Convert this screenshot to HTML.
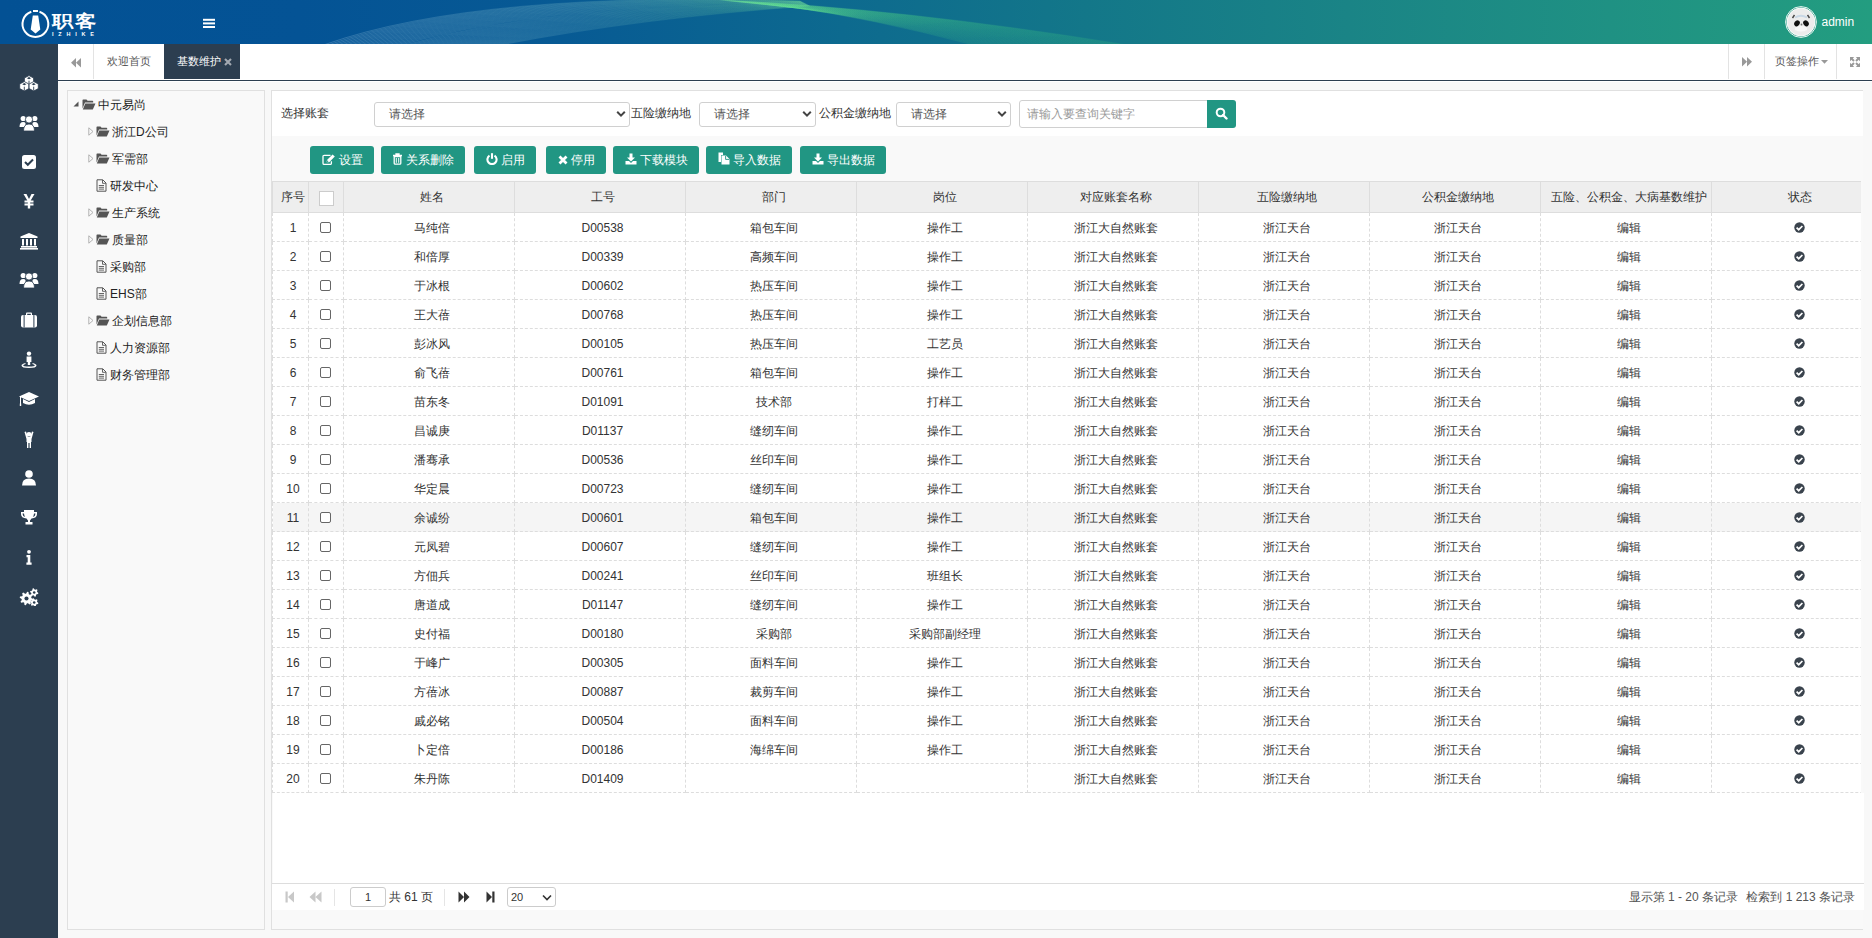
<!DOCTYPE html>
<html><head><meta charset="utf-8"><title>基数维护</title>
<style>
*{margin:0;padding:0;box-sizing:border-box}
html,body{width:1872px;height:938px;overflow:hidden}
body{position:relative;font-family:"Liberation Sans",sans-serif;font-size:12px;color:#333;background:#f8f8f8}
.a{position:absolute}
#hdr{left:0;top:0;width:1872px;height:44px;background:linear-gradient(90deg,#035194 0%,#045395 16%,#075a94 30%,#0d6a8f 45%,#137789 58%,#1a8486 72%,#1f9183 86%,#239d80 100%);overflow:hidden}
#side{left:0;top:44px;width:58px;height:894px;background:#2c3e50}
#side svg{position:absolute;left:19px;fill:#fff}
#tabs{left:58px;top:44px;width:1814px;height:37px;background:#fff;border-bottom:1px solid #2c3e50}
.tb{position:absolute;top:0;height:35px;line-height:35px;text-align:center;color:#555;font-size:12px}
#content{left:58px;top:81px;width:1814px;height:857px;background:#f8f8f8}
#tree{left:67px;top:90px;width:198px;height:840px;background:#f9f9f9;border:1px solid #e0e0e0}
.ti{position:absolute;height:20px;line-height:20px;color:#222;font-size:12px;white-space:nowrap}
#main{left:271px;top:90px;width:1592px;height:840px;background:#f9f9f9;border:1px solid #e0e0e0;border-right:none}
#srch{left:0;top:0;width:1591px;height:45px;background:#fff}
.lbl{position:absolute;top:0;height:45px;line-height:45px;color:#333;font-size:12px;white-space:nowrap}
.sel{position:absolute;height:25px;border:1px solid #d0d0d0;border-radius:3px;background:#fff;color:#555;font-size:12px;line-height:23px}
.sel .arr{position:absolute;right:3px;top:7px;width:10px;height:8px}
.btn{position:absolute;top:55px;height:28px;line-height:28px;background:#219683;color:#fff;border-radius:3px;font-size:12px;white-space:nowrap;text-align:center}
.btn svg{vertical-align:-1px;fill:#fff;margin-right:3px}
#tw{position:absolute;left:0;top:90px;width:1589px;height:702px;overflow:hidden}
#tbl{position:absolute;left:0;top:0;width:1610px;border-collapse:collapse;table-layout:fixed;background:#fff}
#tbl th{height:31px;background:#eee;border:1px solid #ddd;font-weight:normal;color:#333;font-size:12px;padding:0 0 0 5px;text-align:center}
#tbl td{height:29px;border:1px dashed #ddd;text-align:center;color:#333;font-size:12px;padding:2px 0 0 5px;white-space:nowrap}
#tbl th.c{padding:0}
#tbl td.c{padding:2px 0 0 0}
#tbl tr.hov td{background:#f5f5f5}
.cb{display:inline-block;width:11px;height:11px;border:1px solid #666;border-radius:2px;vertical-align:middle;background:#fff;position:relative;left:-1px;top:-1px}
.cbh{display:inline-block;width:15px;height:15px;border:1px solid #ccc;background:#fff;vertical-align:middle;position:relative;top:1px}
.ok{display:inline-block;width:11px;height:11px;vertical-align:middle;position:relative;top:-1px}
#white{left:1px;top:702px;width:1591px;height:91px;background:#fff}
#pager{left:0;top:792px;width:1592px;height:27px;background:#fff;border-top:1px solid #ddd}

</style></head><body>
<div id="hdr" class="a">
<svg class="a" style="left:0;top:0" width="1872" height="44" viewBox="0 0 1872 44">
<defs><linearGradient id="g1" gradientUnits="userSpaceOnUse" x1="330" y1="0" x2="830" y2="0"><stop offset="0" stop-color="rgb(200,230,245)" stop-opacity="0.5"/><stop offset="0.5" stop-color="rgb(160,220,215)" stop-opacity="0.3"/><stop offset="0.8" stop-color="rgb(120,215,160)" stop-opacity="0.25"/><stop offset="1" stop-color="rgb(110,225,150)" stop-opacity="0.3"/></linearGradient>
<linearGradient id="g2" gradientUnits="userSpaceOnUse" x1="720" y1="0" x2="1130" y2="44"><stop offset="0" stop-color="rgb(110,225,150)" stop-opacity="0.35"/><stop offset="0.4" stop-color="rgb(80,215,130)" stop-opacity="0.32"/><stop offset="1" stop-color="rgb(60,205,125)" stop-opacity="0.3"/></linearGradient></defs>
<g fill="none" stroke-width="0.45">
<path d="M325.0 44.5 Q480.0 -10.0 800.0 1.0" stroke="url(#g1)"/>
<path d="M329.6 44.5 Q484.1 -9.3 800.3 1.1" stroke="url(#g1)"/>
<path d="M334.1 44.5 Q488.2 -8.6 800.5 1.3" stroke="url(#g1)"/>
<path d="M338.7 44.5 Q492.3 -7.8 800.8 1.4" stroke="url(#g1)"/>
<path d="M343.3 44.5 Q496.4 -7.1 801.0 1.5" stroke="url(#g1)"/>
<path d="M347.8 44.5 Q500.5 -6.4 801.3 1.6" stroke="url(#g1)"/>
<path d="M352.4 44.5 Q504.6 -5.7 801.5 1.8" stroke="url(#g1)"/>
<path d="M356.9 44.5 Q508.7 -5.0 801.8 1.9" stroke="url(#g1)"/>
<path d="M361.5 44.5 Q512.8 -4.3 802.1 2.0" stroke="url(#g1)"/>
<path d="M366.1 44.5 Q516.9 -3.5 802.3 2.2" stroke="url(#g1)"/>
<path d="M370.6 44.5 Q521.0 -2.8 802.6 2.3" stroke="url(#g1)"/>
<path d="M375.2 44.5 Q525.1 -2.1 802.8 2.4" stroke="url(#g1)"/>
<path d="M379.8 44.5 Q529.2 -1.4 803.1 2.5" stroke="url(#g1)"/>
<path d="M384.3 44.5 Q533.3 -0.7 803.3 2.7" stroke="url(#g1)"/>
<path d="M388.9 44.5 Q537.4 0.1 803.6 2.8" stroke="url(#g1)"/>
<path d="M393.5 44.5 Q541.5 0.8 803.8 2.9" stroke="url(#g1)"/>
<path d="M398.0 44.5 Q545.6 1.5 804.1 3.1" stroke="url(#g1)"/>
<path d="M402.6 44.5 Q549.7 2.2 804.4 3.2" stroke="url(#g1)"/>
<path d="M407.2 44.5 Q553.8 2.9 804.6 3.3" stroke="url(#g1)"/>
<path d="M411.7 44.5 Q557.9 3.6 804.9 3.4" stroke="url(#g1)"/>
<path d="M416.3 44.5 Q562.1 4.4 805.1 3.6" stroke="url(#g1)"/>
<path d="M420.8 44.5 Q566.2 5.1 805.4 3.7" stroke="url(#g1)"/>
<path d="M425.4 44.5 Q570.3 5.8 805.6 3.8" stroke="url(#g1)"/>
<path d="M430.0 44.5 Q574.4 6.5 805.9 3.9" stroke="url(#g1)"/>
<path d="M434.5 44.5 Q578.5 7.2 806.2 4.1" stroke="url(#g1)"/>
<path d="M439.1 44.5 Q582.6 7.9 806.4 4.2" stroke="url(#g1)"/>
<path d="M443.7 44.5 Q586.7 8.7 806.7 4.3" stroke="url(#g1)"/>
<path d="M448.2 44.5 Q590.8 9.4 806.9 4.5" stroke="url(#g1)"/>
<path d="M452.8 44.5 Q594.9 10.1 807.2 4.6" stroke="url(#g1)"/>
<path d="M457.4 44.5 Q599.0 10.8 807.4 4.7" stroke="url(#g1)"/>
<path d="M461.9 44.5 Q603.1 11.5 807.7 4.8" stroke="url(#g1)"/>
<path d="M466.5 44.5 Q607.2 12.3 807.9 5.0" stroke="url(#g1)"/>
<path d="M471.1 44.5 Q611.3 13.0 808.2 5.1" stroke="url(#g1)"/>
<path d="M475.6 44.5 Q615.4 13.7 808.5 5.2" stroke="url(#g1)"/>
<path d="M480.2 44.5 Q619.5 14.4 808.7 5.4" stroke="url(#g1)"/>
<path d="M484.7 44.5 Q623.6 15.1 809.0 5.5" stroke="url(#g1)"/>
<path d="M489.3 44.5 Q627.7 15.8 809.2 5.6" stroke="url(#g1)"/>
<path d="M493.9 44.5 Q631.8 16.6 809.5 5.7" stroke="url(#g1)"/>
<path d="M498.4 44.5 Q635.9 17.3 809.7 5.9" stroke="url(#g1)"/>
<path d="M503.0 44.5 Q640.0 18.0 810.0 6.0" stroke="url(#g1)"/>
<path d="M720.0 0.0 Q900.0 8.0 1124.0 44.5" stroke="url(#g2)"/>
<path d="M721.8 0.2 Q899.2 8.3 1120.1 44.5" stroke="url(#g2)"/>
<path d="M723.6 0.4 Q898.5 8.5 1116.2 44.5" stroke="url(#g2)"/>
<path d="M725.4 0.5 Q897.7 8.8 1112.3 44.5" stroke="url(#g2)"/>
<path d="M727.2 0.7 Q896.9 9.0 1108.4 44.5" stroke="url(#g2)"/>
<path d="M729.0 0.9 Q896.2 9.3 1104.5 44.5" stroke="url(#g2)"/>
<path d="M730.8 1.1 Q895.4 9.5 1100.6 44.5" stroke="url(#g2)"/>
<path d="M732.6 1.3 Q894.6 9.8 1096.7 44.5" stroke="url(#g2)"/>
<path d="M734.4 1.4 Q893.8 10.1 1092.8 44.5" stroke="url(#g2)"/>
<path d="M736.2 1.6 Q893.1 10.3 1088.9 44.5" stroke="url(#g2)"/>
<path d="M737.9 1.8 Q892.3 10.6 1085.0 44.5" stroke="url(#g2)"/>
<path d="M739.7 2.0 Q891.5 10.8 1081.1 44.5" stroke="url(#g2)"/>
<path d="M741.5 2.2 Q890.8 11.1 1077.2 44.5" stroke="url(#g2)"/>
<path d="M743.3 2.3 Q890.0 11.3 1073.3 44.5" stroke="url(#g2)"/>
<path d="M745.1 2.5 Q889.2 11.6 1069.4 44.5" stroke="url(#g2)"/>
<path d="M746.9 2.7 Q888.5 11.8 1065.5 44.5" stroke="url(#g2)"/>
<path d="M748.7 2.9 Q887.7 12.1 1061.6 44.5" stroke="url(#g2)"/>
<path d="M750.5 3.1 Q886.9 12.4 1057.7 44.5" stroke="url(#g2)"/>
<path d="M752.3 3.2 Q886.2 12.6 1053.8 44.5" stroke="url(#g2)"/>
<path d="M754.1 3.4 Q885.4 12.9 1049.9 44.5" stroke="url(#g2)"/>
<path d="M755.9 3.6 Q884.6 13.1 1046.1 44.5" stroke="url(#g2)"/>
<path d="M757.7 3.8 Q883.8 13.4 1042.2 44.5" stroke="url(#g2)"/>
<path d="M759.5 3.9 Q883.1 13.6 1038.3 44.5" stroke="url(#g2)"/>
<path d="M761.3 4.1 Q882.3 13.9 1034.4 44.5" stroke="url(#g2)"/>
<path d="M763.1 4.3 Q881.5 14.2 1030.5 44.5" stroke="url(#g2)"/>
<path d="M764.9 4.5 Q880.8 14.4 1026.6 44.5" stroke="url(#g2)"/>
<path d="M766.7 4.7 Q880.0 14.7 1022.7 44.5" stroke="url(#g2)"/>
<path d="M768.5 4.8 Q879.2 14.9 1018.8 44.5" stroke="url(#g2)"/>
<path d="M770.3 5.0 Q878.5 15.2 1014.9 44.5" stroke="url(#g2)"/>
<path d="M772.1 5.2 Q877.7 15.4 1011.0 44.5" stroke="url(#g2)"/>
<path d="M773.8 5.4 Q876.9 15.7 1007.1 44.5" stroke="url(#g2)"/>
<path d="M775.6 5.6 Q876.2 15.9 1003.2 44.5" stroke="url(#g2)"/>
<path d="M777.4 5.7 Q875.4 16.2 999.3 44.5" stroke="url(#g2)"/>
<path d="M779.2 5.9 Q874.6 16.5 995.4 44.5" stroke="url(#g2)"/>
<path d="M781.0 6.1 Q873.8 16.7 991.5 44.5" stroke="url(#g2)"/>
<path d="M782.8 6.3 Q873.1 17.0 987.6 44.5" stroke="url(#g2)"/>
<path d="M784.6 6.5 Q872.3 17.2 983.7 44.5" stroke="url(#g2)"/>
<path d="M786.4 6.6 Q871.5 17.5 979.8 44.5" stroke="url(#g2)"/>
<path d="M788.2 6.8 Q870.8 17.7 975.9 44.5" stroke="url(#g2)"/>
<path d="M790.0 7.0 Q870.0 18.0 972.0 44.5" stroke="url(#g2)"/>
</g>
<g fill="none" stroke="#fff" stroke-width="2"><path d="M31.3 11.8 A12.9 12.9 0 1 0 39.5 11.8"/></g>
<rect x="33" y="10" width="5" height="2" fill="#fff"/>
<path d="M32.8 15.5 L38.2 15.5 L40.3 29.5 L35.5 33.5 L30.7 29.5 Z" fill="#fff"/>
<text x="0" y="0" transform="translate(51.5 27.4) scale(1 0.8)" font-family="Liberation Sans,sans-serif" font-size="21" font-weight="bold" fill="#fff" textLength="44">职客</text>
<text x="52" y="35.5" font-family="Liberation Sans,sans-serif" font-size="5.5" font-weight="bold" fill="#fff" textLength="42" lengthAdjust="spacing">IZHIKE</text>
<rect x="203" y="18.8" width="12" height="2" fill="#fff"/><rect x="203" y="22.4" width="12" height="2" fill="#fff"/><rect x="203" y="26" width="12" height="2" fill="#fff"/>
<circle cx="1801" cy="22" r="15.4" fill="none" stroke="#fff" stroke-width="0.9"/>
<circle cx="1801" cy="22" r="14" fill="#ececec" stroke="#fff" stroke-width="0.9"/>
<path d="M1795 30 Q1801 33 1807 30 Q1808 26 1801 26 Q1794 26 1795 30Z" fill="#f8f8f8"/>
<path d="M1794.5 15 l-2 3 M1807.5 15 l2 3" stroke="#444" stroke-width="1.4"/>
<path d="M1795 17.5 Q1801 14 1807 17.5" stroke="#c9d8e6" stroke-width="2" fill="none"/>
<ellipse cx="1797" cy="23.3" rx="2.6" ry="3.2" fill="#111" transform="rotate(35 1797 23.3)"/><ellipse cx="1806" cy="23.3" rx="2.6" ry="3.2" fill="#111" transform="rotate(-35 1806 23.3)"/>
<circle cx="1801.5" cy="24.5" r="0.9" fill="#777"/>
<text x="1821.5" y="25.6" font-family="Liberation Sans,sans-serif" font-size="12" fill="#fff">admin</text>
</svg>
</div>
<div id="side" class="a">
<svg style="left:19.0px;top:30.5px" width="20" height="17" viewBox="0 0 20 17"><path d="M10.00 0.60 L14.60 3.00 L14.60 7.60 L10.00 10.00 L5.40 7.60 L5.40 3.00Z" fill="#fff" stroke="#2c3e50" stroke-width="0.8"/><path d="M10.00 2.12 L12.07 3.20 L10.00 4.28 L7.93 3.20Z" fill="#2c3e50"/><path d="M10.00 5.70 V9.70" stroke="#2c3e50" stroke-width="0.9"/><path d="M5.30 6.60 L9.90 9.00 L9.90 13.60 L5.30 16.00 L0.70 13.60 L0.70 9.00Z" fill="#fff" stroke="#2c3e50" stroke-width="0.8"/><path d="M5.30 8.12 L7.37 9.20 L5.30 10.28 L3.23 9.20Z" fill="#2c3e50"/><path d="M5.30 11.70 V15.70" stroke="#2c3e50" stroke-width="0.9"/><path d="M14.70 6.60 L19.30 9.00 L19.30 13.60 L14.70 16.00 L10.10 13.60 L10.10 9.00Z" fill="#fff" stroke="#2c3e50" stroke-width="0.8"/><path d="M14.70 8.12 L16.77 9.20 L14.70 10.28 L12.63 9.20Z" fill="#2c3e50"/><path d="M14.70 11.70 V15.70" stroke="#2c3e50" stroke-width="0.9"/></svg>
<svg style="left:19.0px;top:70.0px" width="20" height="18" viewBox="0 0 20 18"><circle cx="4.2" cy="4.5" r="2.6"/><circle cx="15.8" cy="4.5" r="2.6"/><path d="M0.5 13 Q0.5 8 4.2 8 Q6 8 6.5 9 L6.5 13Z"/><path d="M19.5 13 Q19.5 8 15.8 8 Q14 8 13.5 9 L13.5 13Z"/><circle cx="10" cy="5.5" r="3.6" stroke="#2c3e50" stroke-width="0.8"/><path d="M4.5 17 Q4.5 10 10 10 Q15.5 10 15.5 17Z" stroke="#2c3e50" stroke-width="0.8"/></svg>
<svg style="left:19.0px;top:109.0px" width="20" height="18" viewBox="0 0 20 18"><rect x="3" y="2" width="14" height="14" rx="2.5"/><path d="M6 9 L8.8 11.8 L14 6.5" stroke="#2c3e50" stroke-width="2" fill="none"/></svg>
<svg style="left:19.0px;top:148.0px" width="20" height="18" viewBox="0 0 20 18"><path d="M4.5 2h3l2.5 5 2.5-5h3l-3.8 6.5h2.8v2h-3.3v1h3.3v2h-3.3v3h-2.4v-3h-3.3v-2h3.3v-1h-3.3v-2h2.8z"/></svg>
<svg style="left:19.0px;top:188.0px" width="20" height="18" viewBox="0 0 20 18"><path d="M10 1 L18.5 4.5 V6 H1.5 V4.5Z"/><rect x="3" y="7" width="2" height="6.5"/><rect x="7" y="7" width="2" height="6.5"/><rect x="11" y="7" width="2" height="6.5"/><rect x="15" y="7" width="2" height="6.5"/><rect x="2" y="14" width="16" height="1.6"/><rect x="1" y="16" width="18" height="1.6"/></svg>
<svg style="left:19.0px;top:227.0px" width="20" height="18" viewBox="0 0 20 18"><circle cx="4.2" cy="4.5" r="2.6"/><circle cx="15.8" cy="4.5" r="2.6"/><path d="M0.5 13 Q0.5 8 4.2 8 Q6 8 6.5 9 L6.5 13Z"/><path d="M19.5 13 Q19.5 8 15.8 8 Q14 8 13.5 9 L13.5 13Z"/><circle cx="10" cy="5.5" r="3.6" stroke="#2c3e50" stroke-width="0.8"/><path d="M4.5 17 Q4.5 10 10 10 Q15.5 10 15.5 17Z" stroke="#2c3e50" stroke-width="0.8"/></svg>
<svg style="left:19.0px;top:267.0px" width="20" height="18" viewBox="0 0 20 18"><path d="M7 4 V2.5 Q7 1.5 8 1.5 H12 Q13 1.5 13 2.5 V4 H11.8 V2.8 H8.2 V4Z"/><rect x="2" y="4" width="16" height="12.5" rx="2"/><rect x="4.6" y="4" width="1" height="12.5" fill="#2c3e50"/><rect x="14.4" y="4" width="1" height="12.5" fill="#2c3e50"/></svg>
<svg style="left:19.0px;top:307.0px" width="20" height="18" viewBox="0 0 20 18"><circle cx="10" cy="2.6" r="2.2"/><path d="M7.6 5.5 H12.4 V11 H11.2 V14 H8.8 V11 H7.6Z"/><path d="M6.5 12 Q2.5 13 2.5 14.5 Q2.5 17 10 17 Q17.5 17 17.5 14.5 Q17.5 13 13.5 12 V13 Q15.8 13.6 15.8 14.5 Q15.8 15.6 10 15.6 Q4.2 15.6 4.2 14.5 Q4.2 13.6 6.5 13Z"/></svg>
<svg style="left:18.0px;top:346.0px" width="22" height="18" viewBox="0 0 22 18"><path d="M11 2 L21 6.5 L11 11 L1 6.5Z"/><path d="M5 9 V13 Q11 16.5 17 13 V9 L11 12Z"/><path d="M2.5 7 V14" stroke="#fff" stroke-width="1" fill="none"/><path d="M1.8 13.5 h1.4 v2.5 h-1.4z"/></svg>
<svg style="left:19.0px;top:387.0px" width="20" height="18" viewBox="0 0 20 18"><circle cx="10" cy="3.3" r="2.4"/><path d="M5.5 1 L7 0.5 L9 6 H11 L13 0.5 L14.5 1 L12.5 8 V11 H12 V17 H10.6 V12 H9.4 V17 H8 V11 H7.5 V8Z"/></svg>
<svg style="left:19.0px;top:425.0px" width="20" height="18" viewBox="0 0 20 18"><circle cx="10" cy="5" r="3.8"/><path d="M3 16.5 Q3 9.5 10 9.5 Q17 9.5 17 16.5Z"/></svg>
<svg style="left:19.0px;top:464.0px" width="20" height="18" viewBox="0 0 20 18"><path d="M5 2 H15 V4 H18 V6 Q18 10 12.5 10.5 Q11.5 12 11 12.5 V14 H13.5 V16.5 H6.5 V14 H9 V12.5 Q8.5 12 7.5 10.5 Q2 10 2 6 V4 H5Z M5 5.5 H3.6 V6 Q3.6 8.5 6.2 9 Q5.2 7.5 5 5.5Z M15 5.5 Q14.8 7.5 13.8 9 Q16.4 8.5 16.4 6 V5.5Z"/></svg>
<svg style="left:19.0px;top:505.0px" width="20" height="18" viewBox="0 0 20 18"><circle cx="10" cy="2.8" r="1.9"/><path d="M7.5 6 H11.3 V13.5 H12.6 V15.8 H7.4 V13.5 H8.7 V8.2 H7.5Z"/></svg>
<svg style="left:19.0px;top:544.0px" width="20" height="18" viewBox="0 0 20 18"><path d="M14.27 11.17 L14.01 12.47 L11.82 12.81 L11.28 13.61 L11.81 15.76 L10.71 16.50 L8.92 15.19 L7.98 15.37 L6.83 17.27 L5.53 17.01 L5.19 14.82 L4.39 14.28 L2.24 14.81 L1.50 13.71 L2.81 11.92 L2.63 10.98 L0.73 9.83 L0.99 8.53 L3.18 8.19 L3.72 7.39 L3.19 5.24 L4.29 4.50 L6.08 5.81 L7.02 5.63 L8.17 3.73 L9.47 3.99 L9.81 6.18 L10.61 6.72 L12.76 6.19 L13.50 7.29 L12.19 9.08 L12.37 10.02Z"/><circle cx="7.50" cy="10.50" r="2.04" fill="#2c3e50"/><path d="M19.36 5.05 L19.08 6.11 L17.60 6.34 L17.04 6.90 L16.81 8.38 L15.75 8.66 L14.81 7.50 L14.04 7.29 L12.64 7.83 L11.87 7.06 L12.41 5.66 L12.20 4.89 L11.04 3.95 L11.32 2.89 L12.80 2.66 L13.36 2.10 L13.59 0.62 L14.65 0.34 L15.59 1.50 L16.36 1.71 L17.76 1.17 L18.53 1.94 L17.99 3.34 L18.20 4.11Z"/><circle cx="15.20" cy="4.50" r="1.26" fill="#2c3e50"/><path d="M19.36 15.05 L19.08 16.11 L17.60 16.34 L17.04 16.90 L16.81 18.38 L15.75 18.66 L14.81 17.50 L14.04 17.29 L12.64 17.83 L11.87 17.06 L12.41 15.66 L12.20 14.89 L11.04 13.95 L11.32 12.89 L12.80 12.66 L13.36 12.10 L13.59 10.62 L14.65 10.34 L15.59 11.50 L16.36 11.71 L17.76 11.17 L18.53 11.94 L17.99 13.34 L18.20 14.11Z"/><circle cx="15.20" cy="14.50" r="1.26" fill="#2c3e50"/></svg>
</div>
<div id="tabs" class="a">
 <div class="tb" style="left:0;width:36px;border-right:1px solid #e3e3e3"><svg width="10" height="10" viewBox="0 0 10 10" style="position:absolute;left:13px;top:13.5px"><path d="M5 0V9.4L0 4.7ZM10 0V9.4L5 4.7Z" fill="#999"/></svg></div>
 <div class="tb" style="left:36px;width:70px;font-size:11px;padding-left:13px;text-align:left">欢迎首页</div>
 <div class="tb" style="left:106px;width:76px;background:#2c3e50;color:#fff;font-size:11px;text-align:left;padding-left:13px">基数维护<svg width="8" height="8" viewBox="0 0 8 8" style="position:absolute;left:60px;top:13.5px"><path d="M1 1L7 7M7 1L1 7" stroke="#a3a9b1" stroke-width="2.1"/></svg></div>
 <div class="tb" style="left:1670px;width:36px;border-left:1px solid #e3e3e3"><svg width="10" height="10" viewBox="0 0 10 10" style="position:absolute;left:13.3px;top:13.4px"><path d="M0 0V9.4L5 4.7ZM5 0V9.4L10 4.7Z" fill="#999"/></svg></div>
 <div class="tb" style="left:1706px;width:72px;border-left:1px solid #e3e3e3;font-size:11px;text-align:left;padding-left:10px">页签操作<svg width="7" height="4" viewBox="0 0 7 4" style="position:absolute;left:56px;top:16px"><path d="M0 0H7L3.5 3.8Z" fill="#999"/></svg></div>
 <div class="tb" style="left:1778px;width:36px;border-left:1px solid #e3e3e3"><svg width="10" height="10" viewBox="0 0 10 10" style="position:absolute;left:13px;top:13px"><path d="M0 0H4.2L0 4.2ZM10 0V4.2L5.8 0ZM0 10V5.8L4.2 10ZM10 10H5.8L10 5.8Z" fill="#999"/><path d="M1.5 1.5L4 4M8.5 1.5L6 4M1.5 8.5L4 6M8.5 8.5L6 6" stroke="#999" stroke-width="2"/></svg></div>
</div>
<div class="a" style="left:58px;top:81px;width:1814px;height:1px;background:#fff"></div>
<div id="tree" class="a">
<div class="a" style="left:5px;top:9.5px;line-height:0"><svg width="6" height="6" viewBox="0 0 6 6"><path d="M5.5 0.5 V5.5 H0.5Z" fill="#555"/></svg></div>
<div class="a" style="left:14px;top:8.0px;line-height:0"><svg width="14" height="11" viewBox="0 0 14 11"><path d="M0.5 1.2 Q0.5 0.5 1.2 0.5 H4.5 L5.6 1.8 H10.5 Q11.2 1.8 11.2 2.5 V3.6 H3 L0.5 9.5Z" fill="#555"/><path d="M3.3 4.4 H13.5 L10.8 10.5 H0.8Z" fill="#555"/></svg></div>
<div class="ti" style="left:30px;top:3.5px">中元易尚</div>
<div class="a" style="left:20px;top:36.0px;line-height:0"><svg width="6" height="9" viewBox="0 0 6 9"><path d="M0.8 0.8 L5 4.5 L0.8 8.2Z" fill="none" stroke="#aaa" stroke-width="0.9"/></svg></div>
<div class="a" style="left:28px;top:35.0px;line-height:0"><svg width="14" height="11" viewBox="0 0 14 11"><path d="M0.5 1.2 Q0.5 0.5 1.2 0.5 H4.5 L5.6 1.8 H10.5 Q11.2 1.8 11.2 2.5 V3.6 H3 L0.5 9.5Z" fill="#555"/><path d="M3.3 4.4 H13.5 L10.8 10.5 H0.8Z" fill="#555"/></svg></div>
<div class="ti" style="left:44px;top:30.5px">浙江D公司</div>
<div class="a" style="left:20px;top:63.0px;line-height:0"><svg width="6" height="9" viewBox="0 0 6 9"><path d="M0.8 0.8 L5 4.5 L0.8 8.2Z" fill="none" stroke="#aaa" stroke-width="0.9"/></svg></div>
<div class="a" style="left:28px;top:62.0px;line-height:0"><svg width="14" height="11" viewBox="0 0 14 11"><path d="M0.5 1.2 Q0.5 0.5 1.2 0.5 H4.5 L5.6 1.8 H10.5 Q11.2 1.8 11.2 2.5 V3.6 H3 L0.5 9.5Z" fill="#555"/><path d="M3.3 4.4 H13.5 L10.8 10.5 H0.8Z" fill="#555"/></svg></div>
<div class="ti" style="left:44px;top:57.5px">军需部</div>
<div class="a" style="left:28px;top:88.0px;line-height:0"><svg width="11" height="13" viewBox="0 0 11 13"><path d="M1 0.8 H6.8 L10 4 V12.2 H1Z" fill="none" stroke="#555" stroke-width="1"/><path d="M6.5 1 V4.3 H9.8" fill="none" stroke="#555" stroke-width="0.9"/><path d="M2.8 6.5 H8 M2.8 8.3 H8 M2.8 10.1 H8" stroke="#555" stroke-width="0.9"/></svg></div>
<div class="ti" style="left:42px;top:84.5px">研发中心</div>
<div class="a" style="left:20px;top:117.0px;line-height:0"><svg width="6" height="9" viewBox="0 0 6 9"><path d="M0.8 0.8 L5 4.5 L0.8 8.2Z" fill="none" stroke="#aaa" stroke-width="0.9"/></svg></div>
<div class="a" style="left:28px;top:116.0px;line-height:0"><svg width="14" height="11" viewBox="0 0 14 11"><path d="M0.5 1.2 Q0.5 0.5 1.2 0.5 H4.5 L5.6 1.8 H10.5 Q11.2 1.8 11.2 2.5 V3.6 H3 L0.5 9.5Z" fill="#555"/><path d="M3.3 4.4 H13.5 L10.8 10.5 H0.8Z" fill="#555"/></svg></div>
<div class="ti" style="left:44px;top:111.5px">生产系统</div>
<div class="a" style="left:20px;top:144.0px;line-height:0"><svg width="6" height="9" viewBox="0 0 6 9"><path d="M0.8 0.8 L5 4.5 L0.8 8.2Z" fill="none" stroke="#aaa" stroke-width="0.9"/></svg></div>
<div class="a" style="left:28px;top:143.0px;line-height:0"><svg width="14" height="11" viewBox="0 0 14 11"><path d="M0.5 1.2 Q0.5 0.5 1.2 0.5 H4.5 L5.6 1.8 H10.5 Q11.2 1.8 11.2 2.5 V3.6 H3 L0.5 9.5Z" fill="#555"/><path d="M3.3 4.4 H13.5 L10.8 10.5 H0.8Z" fill="#555"/></svg></div>
<div class="ti" style="left:44px;top:138.5px">质量部</div>
<div class="a" style="left:28px;top:169.0px;line-height:0"><svg width="11" height="13" viewBox="0 0 11 13"><path d="M1 0.8 H6.8 L10 4 V12.2 H1Z" fill="none" stroke="#555" stroke-width="1"/><path d="M6.5 1 V4.3 H9.8" fill="none" stroke="#555" stroke-width="0.9"/><path d="M2.8 6.5 H8 M2.8 8.3 H8 M2.8 10.1 H8" stroke="#555" stroke-width="0.9"/></svg></div>
<div class="ti" style="left:42px;top:165.5px">采购部</div>
<div class="a" style="left:28px;top:196.0px;line-height:0"><svg width="11" height="13" viewBox="0 0 11 13"><path d="M1 0.8 H6.8 L10 4 V12.2 H1Z" fill="none" stroke="#555" stroke-width="1"/><path d="M6.5 1 V4.3 H9.8" fill="none" stroke="#555" stroke-width="0.9"/><path d="M2.8 6.5 H8 M2.8 8.3 H8 M2.8 10.1 H8" stroke="#555" stroke-width="0.9"/></svg></div>
<div class="ti" style="left:42px;top:192.5px">EHS部</div>
<div class="a" style="left:20px;top:225.0px;line-height:0"><svg width="6" height="9" viewBox="0 0 6 9"><path d="M0.8 0.8 L5 4.5 L0.8 8.2Z" fill="none" stroke="#aaa" stroke-width="0.9"/></svg></div>
<div class="a" style="left:28px;top:224.0px;line-height:0"><svg width="14" height="11" viewBox="0 0 14 11"><path d="M0.5 1.2 Q0.5 0.5 1.2 0.5 H4.5 L5.6 1.8 H10.5 Q11.2 1.8 11.2 2.5 V3.6 H3 L0.5 9.5Z" fill="#555"/><path d="M3.3 4.4 H13.5 L10.8 10.5 H0.8Z" fill="#555"/></svg></div>
<div class="ti" style="left:44px;top:219.5px">企划信息部</div>
<div class="a" style="left:28px;top:250.0px;line-height:0"><svg width="11" height="13" viewBox="0 0 11 13"><path d="M1 0.8 H6.8 L10 4 V12.2 H1Z" fill="none" stroke="#555" stroke-width="1"/><path d="M6.5 1 V4.3 H9.8" fill="none" stroke="#555" stroke-width="0.9"/><path d="M2.8 6.5 H8 M2.8 8.3 H8 M2.8 10.1 H8" stroke="#555" stroke-width="0.9"/></svg></div>
<div class="ti" style="left:42px;top:246.5px">人力资源部</div>
<div class="a" style="left:28px;top:277.0px;line-height:0"><svg width="11" height="13" viewBox="0 0 11 13"><path d="M1 0.8 H6.8 L10 4 V12.2 H1Z" fill="none" stroke="#555" stroke-width="1"/><path d="M6.5 1 V4.3 H9.8" fill="none" stroke="#555" stroke-width="0.9"/><path d="M2.8 6.5 H8 M2.8 8.3 H8 M2.8 10.1 H8" stroke="#555" stroke-width="0.9"/></svg></div>
<div class="ti" style="left:42px;top:273.5px">财务管理部</div>
</div>
<div id="main" class="a">
 <div id="srch" class="a"></div>
 <div class="lbl" style="left:9px">选择账套</div>
 <div class="sel" style="left:102px;top:11px;width:256px"><span style="position:absolute;left:14px">请选择</span><svg class="arr" viewBox="0 0 10 8"><path d="M1.2 1.8 L5 5.6 L8.8 1.8" fill="none" stroke="#444" stroke-width="2"/></svg></div>
 <div class="lbl" style="left:359px">五险缴纳地</div>
 <div class="sel" style="left:427px;top:11px;width:117px"><span style="position:absolute;left:14px">请选择</span><svg class="arr" viewBox="0 0 10 8"><path d="M1.2 1.8 L5 5.6 L8.8 1.8" fill="none" stroke="#444" stroke-width="2"/></svg></div>
 <div class="lbl" style="left:547px">公积金缴纳地</div>
 <div class="sel" style="left:624px;top:11px;width:115px"><span style="position:absolute;left:14px">请选择</span><svg class="arr" viewBox="0 0 10 8"><path d="M1.2 1.8 L5 5.6 L8.8 1.8" fill="none" stroke="#444" stroke-width="2"/></svg></div>
 <div class="sel" style="left:747px;top:9px;width:189px;height:28px;line-height:26px;border-radius:3px 0 0 3px;color:#999"><span style="position:absolute;left:7px">请输入要查询关键字</span></div>
 <div class="a" style="left:935px;top:9px;width:29px;height:28px;background:#219683;border-radius:0 3px 3px 0"><svg class="a" style="left:8px;top:7px" width="13" height="13" viewBox="0 0 13 13"><circle cx="5.5" cy="5.5" r="3.8" fill="none" stroke="#fff" stroke-width="2"/><path d="M8 8l3.5 3.5" stroke="#fff" stroke-width="2.4" stroke-linecap="round"/></svg></div>
 <div class="btn" style="left:38px;width:64px"><svg width="14" height="11" viewBox="0 0 14 11" style="vertical-align:-1px"><path d="M8.5 1.3 H2.2 Q1 1.3 1 2.5 V9.2 Q1 10.4 2.2 10.4 H8.2 Q9.4 10.4 9.4 9.2 V7.2" fill="none" stroke="#fff" stroke-width="1.3"/><path d="M4.6 8.2 L5 6 L10.6 0.4 L12.8 2.6 L7.2 8.2Z" fill="#fff"/><circle cx="5.6" cy="7.3" r="0.7" fill="#219683"/></svg>设置</div>
<div class="btn" style="left:109px;width:84px"><svg width="11" height="12" viewBox="0 0 11 12"><path d="M1 2.5 H10 M4 2.5 V1 H7 V2.5" stroke="#fff" stroke-width="1.3" fill="none"/><path d="M2.2 3.5 H8.8 V10.2 Q8.8 11.2 7.8 11.2 H3.2 Q2.2 11.2 2.2 10.2Z" fill="none" stroke="#fff" stroke-width="1.3"/><path d="M4.3 5 V9.8 M6.7 5 V9.8" stroke="#fff" stroke-width="1"/></svg>关系删除</div>
<div class="btn" style="left:202px;width:62px"><svg width="12" height="12" viewBox="0 0 12 12"><path d="M3.5 2.6 A4.6 4.6 0 1 0 8.5 2.6" fill="none" stroke="#fff" stroke-width="2.1"/><path d="M6 0.2 V5.8" stroke="#fff" stroke-width="2.1"/></svg>启用</div>
<div class="btn" style="left:274px;width:60px"><svg width="10" height="10" viewBox="0 0 10 10"><path d="M1.5 1.5 L8.5 8.5 M8.5 1.5 L1.5 8.5" stroke="#fff" stroke-width="2.8"/></svg>停用</div>
<div class="btn" style="left:341px;width:86px"><svg width="12" height="12" viewBox="0 0 12 12"><path d="M4.5 0.5 H7.5 V4.5 H10 L6 8.5 L2 4.5 H4.5Z" fill="#fff"/><path d="M0.5 8 H4 L6 10 L8 8 H11.5 V11.5 H0.5Z" fill="#fff"/></svg>下载模块</div>
<div class="btn" style="left:434px;width:86px"><svg width="12" height="13" viewBox="0 0 12 13"><path d="M0.5 0.5 H5 V3 H3 V10 H0.5Z" fill="#fff"/><path d="M3.5 3.5 H8 L11.5 7 V12.5 H3.5Z" fill="#fff"/><path d="M7.6 3.8 V7.4 H11.2" fill="none" stroke="#219683" stroke-width="0.9"/></svg>导入数据</div>
<div class="btn" style="left:528px;width:86px"><svg width="12" height="12" viewBox="0 0 12 12"><path d="M4.5 0.5 H7.5 V4.5 H10 L6 8.5 L2 4.5 H4.5Z" fill="#fff"/><path d="M0.5 8 H4 L6 10 L8 8 H11.5 V11.5 H0.5Z" fill="#fff"/></svg>导出数据</div>
 <div id="white" class="a"></div>
 <div id="tw"><table id="tbl">
 <colgroup><col style="width:36px"><col style="width:35px"><col style="width:171px"><col style="width:171px"><col style="width:171px"><col style="width:171px"><col style="width:171px"><col style="width:171px"><col style="width:171px"><col style="width:171px"><col style="width:171px"></colgroup>
 <tr><th>序号</th><th class="c"><i class="cbh"></i></th><th>姓名</th><th>工号</th><th>部门</th><th>岗位</th><th>对应账套名称</th><th>五险缴纳地</th><th>公积金缴纳地</th><th>五险、公积金、大病基数维护</th><th>状态</th></tr>
<tr><td>1</td><td class="c"><i class="cb"></i></td><td>马纯倍</td><td>D00538</td><td>箱包车间</td><td>操作工</td><td>浙江大自然账套</td><td>浙江天台</td><td>浙江天台</td><td>编辑</td><td><svg class="ok" viewBox="0 0 11 11"><circle cx="5.5" cy="5.5" r="5.2" fill="#3a434d"/><path d="M2.6 5.6L4.7 7.7L8.4 4" fill="none" stroke="#fff" stroke-width="1.7"/></svg></td></tr>
<tr><td>2</td><td class="c"><i class="cb"></i></td><td>和倍厚</td><td>D00339</td><td>高频车间</td><td>操作工</td><td>浙江大自然账套</td><td>浙江天台</td><td>浙江天台</td><td>编辑</td><td><svg class="ok" viewBox="0 0 11 11"><circle cx="5.5" cy="5.5" r="5.2" fill="#3a434d"/><path d="M2.6 5.6L4.7 7.7L8.4 4" fill="none" stroke="#fff" stroke-width="1.7"/></svg></td></tr>
<tr><td>3</td><td class="c"><i class="cb"></i></td><td>于冰根</td><td>D00602</td><td>热压车间</td><td>操作工</td><td>浙江大自然账套</td><td>浙江天台</td><td>浙江天台</td><td>编辑</td><td><svg class="ok" viewBox="0 0 11 11"><circle cx="5.5" cy="5.5" r="5.2" fill="#3a434d"/><path d="M2.6 5.6L4.7 7.7L8.4 4" fill="none" stroke="#fff" stroke-width="1.7"/></svg></td></tr>
<tr><td>4</td><td class="c"><i class="cb"></i></td><td>王大蓓</td><td>D00768</td><td>热压车间</td><td>操作工</td><td>浙江大自然账套</td><td>浙江天台</td><td>浙江天台</td><td>编辑</td><td><svg class="ok" viewBox="0 0 11 11"><circle cx="5.5" cy="5.5" r="5.2" fill="#3a434d"/><path d="M2.6 5.6L4.7 7.7L8.4 4" fill="none" stroke="#fff" stroke-width="1.7"/></svg></td></tr>
<tr><td>5</td><td class="c"><i class="cb"></i></td><td>彭冰风</td><td>D00105</td><td>热压车间</td><td>工艺员</td><td>浙江大自然账套</td><td>浙江天台</td><td>浙江天台</td><td>编辑</td><td><svg class="ok" viewBox="0 0 11 11"><circle cx="5.5" cy="5.5" r="5.2" fill="#3a434d"/><path d="M2.6 5.6L4.7 7.7L8.4 4" fill="none" stroke="#fff" stroke-width="1.7"/></svg></td></tr>
<tr><td>6</td><td class="c"><i class="cb"></i></td><td>俞飞蓓</td><td>D00761</td><td>箱包车间</td><td>操作工</td><td>浙江大自然账套</td><td>浙江天台</td><td>浙江天台</td><td>编辑</td><td><svg class="ok" viewBox="0 0 11 11"><circle cx="5.5" cy="5.5" r="5.2" fill="#3a434d"/><path d="M2.6 5.6L4.7 7.7L8.4 4" fill="none" stroke="#fff" stroke-width="1.7"/></svg></td></tr>
<tr><td>7</td><td class="c"><i class="cb"></i></td><td>苗东冬</td><td>D01091</td><td>技术部</td><td>打样工</td><td>浙江大自然账套</td><td>浙江天台</td><td>浙江天台</td><td>编辑</td><td><svg class="ok" viewBox="0 0 11 11"><circle cx="5.5" cy="5.5" r="5.2" fill="#3a434d"/><path d="M2.6 5.6L4.7 7.7L8.4 4" fill="none" stroke="#fff" stroke-width="1.7"/></svg></td></tr>
<tr><td>8</td><td class="c"><i class="cb"></i></td><td>昌诚庚</td><td>D01137</td><td>缝纫车间</td><td>操作工</td><td>浙江大自然账套</td><td>浙江天台</td><td>浙江天台</td><td>编辑</td><td><svg class="ok" viewBox="0 0 11 11"><circle cx="5.5" cy="5.5" r="5.2" fill="#3a434d"/><path d="M2.6 5.6L4.7 7.7L8.4 4" fill="none" stroke="#fff" stroke-width="1.7"/></svg></td></tr>
<tr><td>9</td><td class="c"><i class="cb"></i></td><td>潘骞承</td><td>D00536</td><td>丝印车间</td><td>操作工</td><td>浙江大自然账套</td><td>浙江天台</td><td>浙江天台</td><td>编辑</td><td><svg class="ok" viewBox="0 0 11 11"><circle cx="5.5" cy="5.5" r="5.2" fill="#3a434d"/><path d="M2.6 5.6L4.7 7.7L8.4 4" fill="none" stroke="#fff" stroke-width="1.7"/></svg></td></tr>
<tr><td>10</td><td class="c"><i class="cb"></i></td><td>华定晨</td><td>D00723</td><td>缝纫车间</td><td>操作工</td><td>浙江大自然账套</td><td>浙江天台</td><td>浙江天台</td><td>编辑</td><td><svg class="ok" viewBox="0 0 11 11"><circle cx="5.5" cy="5.5" r="5.2" fill="#3a434d"/><path d="M2.6 5.6L4.7 7.7L8.4 4" fill="none" stroke="#fff" stroke-width="1.7"/></svg></td></tr>
<tr class="hov"><td>11</td><td class="c"><i class="cb"></i></td><td>余诚纷</td><td>D00601</td><td>箱包车间</td><td>操作工</td><td>浙江大自然账套</td><td>浙江天台</td><td>浙江天台</td><td>编辑</td><td><svg class="ok" viewBox="0 0 11 11"><circle cx="5.5" cy="5.5" r="5.2" fill="#3a434d"/><path d="M2.6 5.6L4.7 7.7L8.4 4" fill="none" stroke="#fff" stroke-width="1.7"/></svg></td></tr>
<tr><td>12</td><td class="c"><i class="cb"></i></td><td>元凤碧</td><td>D00607</td><td>缝纫车间</td><td>操作工</td><td>浙江大自然账套</td><td>浙江天台</td><td>浙江天台</td><td>编辑</td><td><svg class="ok" viewBox="0 0 11 11"><circle cx="5.5" cy="5.5" r="5.2" fill="#3a434d"/><path d="M2.6 5.6L4.7 7.7L8.4 4" fill="none" stroke="#fff" stroke-width="1.7"/></svg></td></tr>
<tr><td>13</td><td class="c"><i class="cb"></i></td><td>方佃兵</td><td>D00241</td><td>丝印车间</td><td>班组长</td><td>浙江大自然账套</td><td>浙江天台</td><td>浙江天台</td><td>编辑</td><td><svg class="ok" viewBox="0 0 11 11"><circle cx="5.5" cy="5.5" r="5.2" fill="#3a434d"/><path d="M2.6 5.6L4.7 7.7L8.4 4" fill="none" stroke="#fff" stroke-width="1.7"/></svg></td></tr>
<tr><td>14</td><td class="c"><i class="cb"></i></td><td>唐道成</td><td>D01147</td><td>缝纫车间</td><td>操作工</td><td>浙江大自然账套</td><td>浙江天台</td><td>浙江天台</td><td>编辑</td><td><svg class="ok" viewBox="0 0 11 11"><circle cx="5.5" cy="5.5" r="5.2" fill="#3a434d"/><path d="M2.6 5.6L4.7 7.7L8.4 4" fill="none" stroke="#fff" stroke-width="1.7"/></svg></td></tr>
<tr><td>15</td><td class="c"><i class="cb"></i></td><td>史付福</td><td>D00180</td><td>采购部</td><td>采购部副经理</td><td>浙江大自然账套</td><td>浙江天台</td><td>浙江天台</td><td>编辑</td><td><svg class="ok" viewBox="0 0 11 11"><circle cx="5.5" cy="5.5" r="5.2" fill="#3a434d"/><path d="M2.6 5.6L4.7 7.7L8.4 4" fill="none" stroke="#fff" stroke-width="1.7"/></svg></td></tr>
<tr><td>16</td><td class="c"><i class="cb"></i></td><td>于峰广</td><td>D00305</td><td>面料车间</td><td>操作工</td><td>浙江大自然账套</td><td>浙江天台</td><td>浙江天台</td><td>编辑</td><td><svg class="ok" viewBox="0 0 11 11"><circle cx="5.5" cy="5.5" r="5.2" fill="#3a434d"/><path d="M2.6 5.6L4.7 7.7L8.4 4" fill="none" stroke="#fff" stroke-width="1.7"/></svg></td></tr>
<tr><td>17</td><td class="c"><i class="cb"></i></td><td>方蓓冰</td><td>D00887</td><td>裁剪车间</td><td>操作工</td><td>浙江大自然账套</td><td>浙江天台</td><td>浙江天台</td><td>编辑</td><td><svg class="ok" viewBox="0 0 11 11"><circle cx="5.5" cy="5.5" r="5.2" fill="#3a434d"/><path d="M2.6 5.6L4.7 7.7L8.4 4" fill="none" stroke="#fff" stroke-width="1.7"/></svg></td></tr>
<tr><td>18</td><td class="c"><i class="cb"></i></td><td>戚必铭</td><td>D00504</td><td>面料车间</td><td>操作工</td><td>浙江大自然账套</td><td>浙江天台</td><td>浙江天台</td><td>编辑</td><td><svg class="ok" viewBox="0 0 11 11"><circle cx="5.5" cy="5.5" r="5.2" fill="#3a434d"/><path d="M2.6 5.6L4.7 7.7L8.4 4" fill="none" stroke="#fff" stroke-width="1.7"/></svg></td></tr>
<tr><td>19</td><td class="c"><i class="cb"></i></td><td>卜定倍</td><td>D00186</td><td>海绵车间</td><td>操作工</td><td>浙江大自然账套</td><td>浙江天台</td><td>浙江天台</td><td>编辑</td><td><svg class="ok" viewBox="0 0 11 11"><circle cx="5.5" cy="5.5" r="5.2" fill="#3a434d"/><path d="M2.6 5.6L4.7 7.7L8.4 4" fill="none" stroke="#fff" stroke-width="1.7"/></svg></td></tr>
<tr><td>20</td><td class="c"><i class="cb"></i></td><td>朱丹陈</td><td>D01409</td><td></td><td></td><td>浙江大自然账套</td><td>浙江天台</td><td>浙江天台</td><td>编辑</td><td><svg class="ok" viewBox="0 0 11 11"><circle cx="5.5" cy="5.5" r="5.2" fill="#3a434d"/><path d="M2.6 5.6L4.7 7.7L8.4 4" fill="none" stroke="#fff" stroke-width="1.7"/></svg></td></tr>
 </table></div>
 <div id="pager" class="a"><svg class="a" style="left:13px;top:7px" width="10" height="12" viewBox="0 0 10 12"><rect x="0.5" y="0.5" width="2.2" height="11" fill="#c8c8c8"/><path d="M9 0.5 V11.5 L3 6Z" fill="#c8c8c8"/></svg>
<svg class="a" style="left:37px;top:7px" width="13" height="12" viewBox="0 0 13 12"><path d="M6.5 0.5 V11.5 L0.5 6Z M12.5 0.5 V11.5 L6.5 6Z" fill="#c8c8c8"/></svg>
<div class="a" style="left:62px;top:5px;width:1px;height:17px;background:#e5e5e5"></div>
<div class="a" style="left:78px;top:3px;width:36px;height:20px;border:1px solid #ccc;border-radius:3px;background:#fff;text-align:center;line-height:19px;color:#333;font-size:11px">1</div>
<div class="a" style="left:117px;top:0;height:26px;line-height:26px;color:#333;white-space:nowrap">共 61 页</div>
<div class="a" style="left:172px;top:5px;width:1px;height:17px;background:#e5e5e5"></div>
<svg class="a" style="left:186px;top:7px" width="12" height="12" viewBox="0 0 12 12"><path d="M0.5 0.5 V11.5 L6 6Z M6 0.5 V11.5 L11.5 6Z" fill="#333"/></svg>
<svg class="a" style="left:214px;top:7px" width="9" height="12" viewBox="0 0 9 12"><path d="M0.5 0.5 V11.5 L6 6Z" fill="#333"/><rect x="6.3" y="0.5" width="2.2" height="11" fill="#333"/></svg>
<div class="a" style="left:235px;top:3px;width:49px;height:20px;border:1px solid #ccc;border-radius:3px;background:#fff;line-height:19px;color:#333"><span style="position:absolute;left:3px;font-size:11px">20</span><svg class="a" style="left:34px;top:6px" width="10" height="8" viewBox="0 0 10 8"><path d="M1 1.5 L5 5.5 L9 1.5" fill="none" stroke="#333" stroke-width="1.6"/></svg></div>
<div class="a" style="right:126px;top:0;height:26px;line-height:26px;color:#555;white-space:nowrap">显示第 1 - 20 条记录</div><div class="a" style="right:9px;top:0;height:26px;line-height:26px;color:#555;white-space:nowrap">检索到 1 213 条记录</div></div>
</div>

</body></html>
